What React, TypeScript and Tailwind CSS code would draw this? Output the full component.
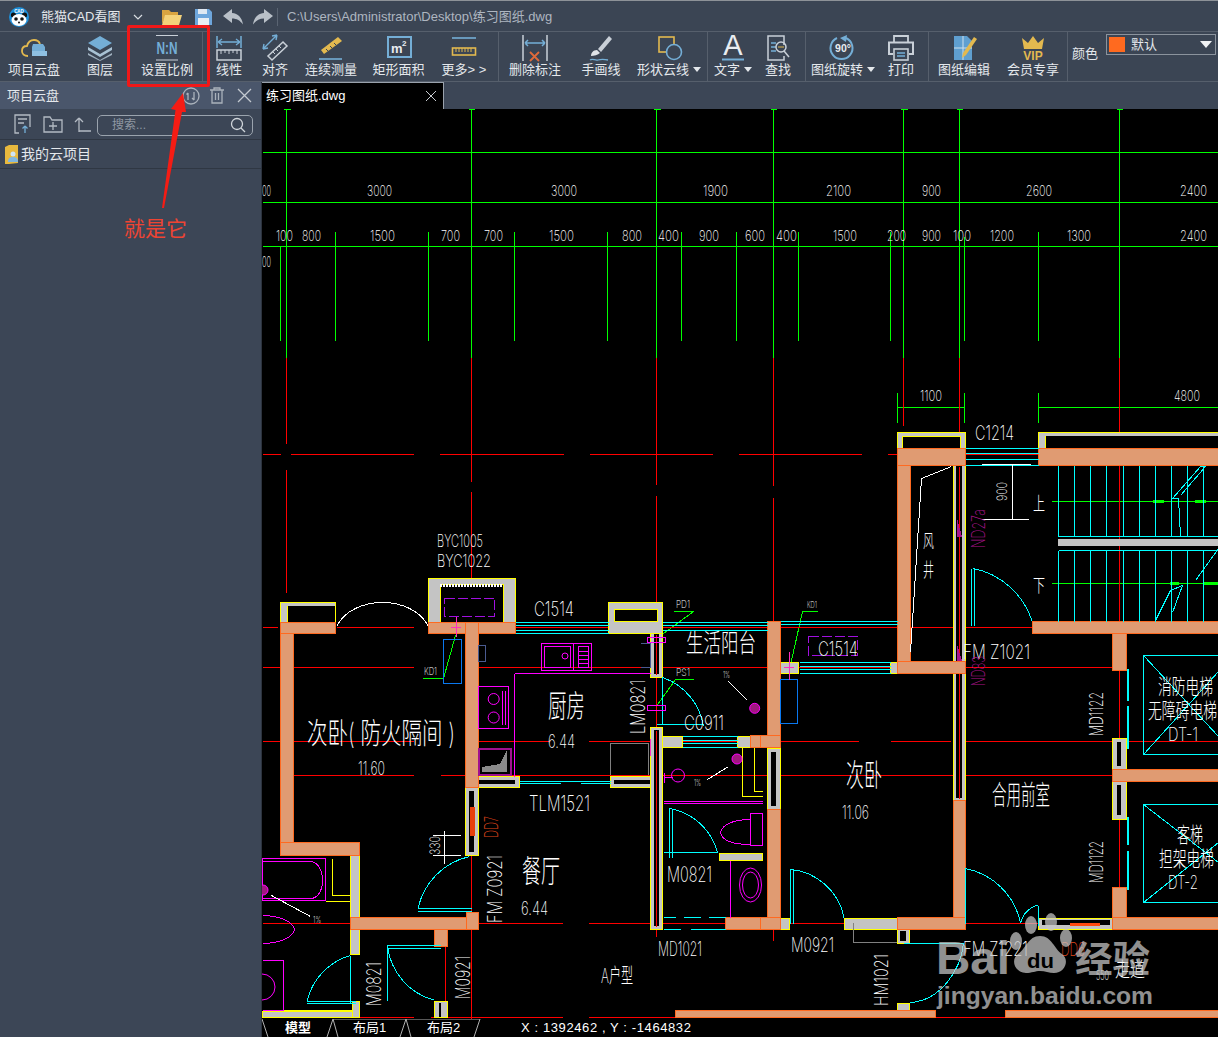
import type { ReactNode } from 'react';

const FONT = "'Liberation Sans','Noto Sans CJK SC',sans-serif";
const CAD_FONT = "Inter,'Noto Sans CJK SC',sans-serif";
const BLUE = '#74aed6';
const GOLD = '#e3b94f';
const PALE = '#c9d0d8';

/* ---------- toolbar icons ---------- */

const Ico = ({ children }: { children: ReactNode }) => (
  <svg width="30" height="28" viewBox="0 0 30 28" fill="none" className="block">
    {children}
  </svg>
);

const TOOL_ICONS: Record<string, ReactNode> = {
  cloud: (
    <Ico>
      <path d="M9 22c-4 0-6-2-6-5s2-5 5-5c1-4 4-6 7-6 3 0 5 1 6 4" stroke={GOLD} strokeWidth="1.8" />
      <path d="M13 13l1-3h10l2 3v5H13z" fill={BLUE} />
      <rect x="13" y="17" width="15" height="5" fill="#8fc0e2" />
    </Ico>
  ),
  layers: (
    <Ico>
      <path d="M15 2l12 7-12 7-12-7z" fill={BLUE} />
      <path d="M3 13l12 7 12-7v3l-12 7-12-7z" fill="#a9c2d4" />
      <path d="M3 19l12 7 12-7v2l-12 6-12-6z" fill="#9fb0be" />
    </Ico>
  ),
  scale: (
    <Ico>
      <path d="M4 1.5h22M4 26h22" stroke={PALE} strokeWidth="1.2" />
      <text x="15" y="20" textAnchor="middle" fontSize="16" fontWeight="700" fill={BLUE} textLength="21" lengthAdjust="spacingAndGlyphs" fontFamily={FONT}>N:N</text>
    </Ico>
  ),
  linear: (
    <Ico>
      <path d="M3 2v12M27 2v12" stroke={BLUE} strokeWidth="1.5" />
      <path d="M4 8h22M4 8l4-3M4 8l4 3M26 8l-4-3M26 8l-4 3" stroke={BLUE} strokeWidth="1.3" />
      <rect x="3" y="16" width="24" height="10" stroke={PALE} strokeWidth="1.5" />
      <path d="M7 16v4M11 16v3M15 16v4M19 16v3M23 16v4" stroke={PALE} />
    </Ico>
  ),
  align: (
    <Ico>
      <path d="M17 1L3 15M3 15l1-5M3 15l5-1M17 1l-5 1M17 1l-1 5" stroke={BLUE} strokeWidth="1.4" />
      <path d="M12 26l-4-4L23 8l4 4z" stroke={PALE} strokeWidth="1.5" />
      <path d="M13 18l2 2M16 15l2 2M19 12l2 2" stroke={PALE} />
    </Ico>
  ),
  chain: (
    <Ico>
      <path d="M8 20l-3-4L22 3l4 4z" fill={GOLD} />
      <path d="M10 15l2 2M14 12l2 2M18 9l2 2" stroke="#3b4554" />
      <path d="M3 25h23" stroke={BLUE} strokeWidth="1.6" />
    </Ico>
  ),
  area: (
    <Ico>
      <rect x="4" y="3" width="23" height="20" stroke={BLUE} strokeWidth="2" />
      <text x="7" y="19" fontSize="13" fontWeight="700" fill="#e8ecf0" fontFamily={FONT}>m</text>
      <text x="18" y="12" fontSize="8" fontWeight="700" fill="#e8ecf0" fontFamily={FONT}>2</text>
    </Ico>
  ),
  more: (
    <Ico>
      <path d="M3 4h24" stroke={BLUE} strokeWidth="1.6" />
      <rect x="3.5" y="14" width="23" height="7" stroke={GOLD} strokeWidth="1.6" />
      <path d="M7 14v4M10 14v4M13 14v4M16 14v4M19 14v4M22 14v4" stroke={GOLD} />
    </Ico>
  ),
  erase: (
    <Ico>
      <path d="M3 1v26M27 1v26" stroke={PALE} strokeWidth="1.5" />
      <path d="M5 9h20M5 9l3-3M5 9l3 3M25 9l-3-3M25 9l-3 3" stroke={BLUE} strokeWidth="1.5" />
      <path d="M10 18l9 9M19 18l-9 9" stroke="#e06a3a" strokeWidth="1.8" />
    </Ico>
  ),
  brush: (
    <Ico>
      <path d="M12 15L23 2l3 3-11 13z" fill={PALE} />
      <path d="M11 16c-4 0-6 3-6 6 3 0 7-1 9-3z" fill="#dfe3e8" />
      <path d="M4 26c3-2 5 1 8 0s6-1 10 0" stroke={BLUE} strokeWidth="1.3" />
    </Ico>
  ),
  shape: (
    <Ico>
      <rect x="5" y="3" width="15" height="15" stroke={GOLD} strokeWidth="1.6" />
      <circle cx="20" cy="18" r="7.5" fill="#3b4554" stroke={BLUE} strokeWidth="1.6" />
    </Ico>
  ),
  text: (
    <Ico>
      <text x="15" y="21" textAnchor="middle" fontSize="29" fill="#e8ecf0" fontFamily={FONT}>A</text>
      <path d="M4 25.5h22" stroke={BLUE} strokeWidth="2" />
    </Ico>
  ),
  find: (
    <Ico>
      <path d="M21 11V2H5v24h16v-4" stroke={PALE} strokeWidth="1.5" />
      <path d="M8 9h5M8 13h5M8 17h5" stroke={BLUE} strokeWidth="1.3" />
      <circle cx="18" cy="13" r="5" stroke={PALE} strokeWidth="1.5" />
      <path d="M21 17l5 6" stroke={PALE} strokeWidth="1.5" />
      <path d="M15 13h6" stroke={GOLD} />
    </Ico>
  ),
  rotate: (
    <Ico>
      <path d="M18 4a11 11 0 1 1-9 0" stroke={BLUE} strokeWidth="2" />
      <path d="M19 1l-7 3 6 4z" fill={BLUE} />
      <text x="15" y="18" textAnchor="middle" fontSize="10.5" fontWeight="700" fill="#e8ecf0" fontFamily={FONT}>90°</text>
    </Ico>
  ),
  print: (
    <Ico>
      <path d="M8 8V2h14v6" stroke={PALE} strokeWidth="1.8" />
      <path d="M7 20H3V8.5h24V20h-4" stroke={PALE} strokeWidth="2" />
      <rect x="8" y="15" width="14" height="11" stroke={PALE} strokeWidth="1.6" />
      <path d="M11 19h8M11 22h8" stroke={BLUE} strokeWidth="1.6" />
    </Ico>
  ),
  edit: (
    <Ico>
      <path d="M5 2h13l5 5v19H5z" fill="#5f9fd0" />
      <path d="M14 2v24M5 14h18" stroke="#cfe0ec" />
      <path d="M13 24l1-5L25 3l3 2-11 16z" fill={GOLD} />
    </Ico>
  ),
  vip: (
    <Ico>
      <path d="M4 4l6 5 5-7 5 7 6-5-2 11H6z" fill={GOLD} />
      <text x="15" y="26" textAnchor="middle" fontSize="12" fontWeight="700" fill={GOLD} fontFamily={FONT}>VIP</text>
    </Ico>
  ),
};

type Tool = { icon?: string; label: string; w: string; caret?: boolean };

const TOOL_GROUPS: Tool[][] = [
  [
    { icon: 'cloud', label: '项目云盘', w: 'w-[68px]' },
    { icon: 'layers', label: '图层', w: 'w-[64px]' },
    { icon: 'scale', label: '设置比例', w: 'w-[70px]' },
  ],
  [
    { icon: 'linear', label: '线性', w: 'w-[52px]' },
    { icon: 'align', label: '对齐', w: 'w-[40px]' },
    { icon: 'chain', label: '连续测量', w: 'w-[72px]' },
    { icon: 'area', label: '矩形面积', w: 'w-[63px]' },
    { icon: 'more', label: '更多> >', w: 'w-[68px]' },
  ],
  [
    { icon: 'erase', label: '删除标注', w: 'w-[72px]' },
    { icon: 'brush', label: '手画线', w: 'w-[60px]' },
    { icon: 'shape', label: '形状云线', w: 'w-[76px]', caret: true },
  ],
  [
    { icon: 'text', label: '文字', w: 'w-[50px]', caret: true },
    { icon: 'find', label: '查找', w: 'w-[47px] pr-[7px]' },
  ],
  [
    { icon: 'rotate', label: '图纸旋转', w: 'w-[74px]', caret: true },
    { icon: 'print', label: '打印', w: 'w-[48px] pr-[6px]' },
  ],
  [
    { icon: 'edit', label: '图纸编辑', w: 'w-[70px]' },
    { icon: 'vip', label: '会员专享', w: 'w-[68px]' },
  ],
];

function ToolButton({ tool }: { tool: Tool }) {
  return (
    <div className={`${tool.w} shrink-0 flex flex-col items-center`}>
      <div className="h-[29px] mt-[1px] flex items-center justify-center">{tool.icon && TOOL_ICONS[tool.icon]}</div>
      <div className="text-[13px] leading-[17px] -mt-[1px] text-[#e4e8ec] whitespace-nowrap flex items-center gap-[4px]">
        {tool.label}
        {tool.caret && <span className="w-0 h-0 border-x-[4px] border-x-transparent border-t-[5px] border-t-[#e4e8ec]" />}
      </div>
    </div>
  );
}

/* ---------- title bar ---------- */

function PandaLogo() {
  return (
    <svg width="20" height="20" viewBox="0 0 20 20">
      <circle cx="10" cy="10" r="10" fill="#1f8fd8" />
      <circle cx="4.5" cy="8" r="2.6" fill="#111" />
      <circle cx="15.5" cy="8" r="2.6" fill="#111" />
      <ellipse cx="10" cy="13" rx="7.5" ry="6" fill="#fff" />
      <circle cx="7" cy="12" r="1.8" fill="#111" />
      <circle cx="13" cy="12" r="1.8" fill="#111" />
      <circle cx="10" cy="15.5" r="1" fill="#111" />
      <text x="10" y="6" textAnchor="middle" fontSize="4.5" fontWeight="700" fill="#fff" fontFamily={FONT}>CAD</text>
    </svg>
  );
}

function TitleBar() {
  return (
    <div className="h-[31px] shrink-0 flex items-center pt-[2px] border-t border-[#8d9298] bg-[#3b4554]">
      <div className="w-[41px] pl-[9px]"><PandaLogo /></div>
      <span className="text-[13px] text-[#e4e8ec] w-[92px]">熊猫CAD看图</span>
      <svg width="10" height="8" viewBox="0 0 10 8" fill="none" className="mr-[18px]">
        <path d="M1 2l4 4 4-4" stroke="#d8dde2" strokeWidth="1.2" />
      </svg>
      <svg width="21" height="18" viewBox="0 0 21 18" className="mr-[12px]">
        <path d="M1 2h7l2 2h7v3H5L1 16z" fill="#d9a441" />
        <path d="M4 7h17l-3 10H1z" fill="#f4d27a" />
      </svg>
      <svg width="19" height="18" viewBox="0 0 19 18" className="mr-[10px]">
        <path d="M1 1h14l3 3v13H1z" fill="#6ea6dc" />
        <rect x="4" y="1" width="9" height="5" fill="#dfe8f2" />
        <rect x="4" y="10" width="11" height="7" fill="#e9eef4" />
      </svg>
      <svg width="21" height="16" viewBox="0 0 21 16" className="mr-[8px]">
        <path d="M9 0L0 7l9 7V9.5c5 0 8 2 11 6-1-7-5-11-11-11.500z" fill="#b9c0c8" />
      </svg>
      <svg width="21" height="16" viewBox="0 0 21 16" className="mr-[4px]">
        <path d="M12 0l9 7-9 7V9.500c-5 0-8 2-11 6 1-7 5-11 11-11.500z" fill="#b9c0c8" />
      </svg>
      <div className="w-px h-[18px] bg-[#5a6472] mr-[9px]" />
      <span className="text-[13px] text-[#aeb6c0]">C:\Users\Administrator\Desktop\练习图纸.dwg</span>
    </div>
  );
}

function ToolBar() {
  return (
    <div className="h-[51px] shrink-0 flex items-stretch border-y border-[#565f6c] bg-[#3b4554]">
      {TOOL_GROUPS.map((group, i) => (
        <div key={i} className="flex border-r border-[#565f6c]">
          {group.map((t) => <ToolButton key={t.label} tool={t} />)}
        </div>
      ))}
      <span className="text-[13px] text-[#e4e8ec] ml-[4px] mr-[8px] self-center -mt-[6px] whitespace-nowrap">颜色</span>
      <div className="w-[110px] h-[21px] mt-[2px] border border-[#8b939d] flex items-center pl-[2px] pr-[3px]">
        <span className="w-[16px] h-[15px] bg-[#ff6a1f] mr-[6px]" />
        <span className="text-[13px] text-[#e4e8ec] flex-1">默认</span>
        <span className="w-0 h-0 border-x-[6px] border-x-transparent border-t-[7px] border-t-[#f0f2f4]" />
      </div>
    </div>
  );
}

/* ---------- left panel ---------- */

function SidePanel() {
  return (
    <div className="w-[262px] shrink-0 bg-[#3c4656] border-r border-[#2c333e] flex flex-col">
      <div className="h-[27px] bg-[#4a566b] flex items-center pl-[7px] text-[13px] text-[#e4e8ec]">
        <span className="flex-1">项目云盘</span>
        <svg width="20" height="20" viewBox="0 0 20 20" fill="none" className="mr-[8px]">
          <circle cx="10" cy="10" r="8" stroke="#aab2bc" strokeWidth="1.3" />
          <path d="M7 7v7M7 7l-1.500 1.500M13 6v8M13 14l-2-2" stroke="#aab2bc" strokeWidth="1.3" />
        </svg>
        <svg width="16" height="17" viewBox="0 0 16 17" fill="none" className="mr-[12px]">
          <path d="M1 3h14M5 3V1h6v2M3 3v13h10V3M6.500 6v7M9.500 6v7" stroke="#aab2bc" strokeWidth="1.3" />
        </svg>
        <svg width="15" height="15" viewBox="0 0 15 15" fill="none" className="mr-[9px]">
          <path d="M1 1l13 13M14 1L1 14" stroke="#c3c9d0" strokeWidth="1.3" />
        </svg>
      </div>
      <div className="h-[31px] border-b border-[#2f3743] flex items-center pl-[13px]">
        <svg width="19" height="20" viewBox="0 0 19 20" fill="none" className="mr-[11px]">
          <path d="M6 19H2V1h15v12" stroke="#b3bac3" strokeWidth="1.300" />
          <path d="M5 5h9M5 9h6" stroke="#b3bac3" strokeWidth="1.300" />
          <path d="M12 19v-7M12 12l-2.500 2.500M12 12l2.500 2.500" stroke={BLUE} strokeWidth="1.300" />
        </svg>
        <svg width="20" height="17" viewBox="0 0 20 17" fill="none" className="mr-[10px]">
          <path d="M1 16V1h6l2 3h10v12z" stroke="#b3bac3" strokeWidth="1.300" />
          <path d="M10 6v8M6 10h8" stroke="#b3bac3" strokeWidth="1.300" />
        </svg>
        <svg width="19" height="17" viewBox="0 0 19 17" fill="none" className="mr-[5px]">
          <path d="M6 16V2M6 2L2 6M6 2l4 4M6 15h12" stroke="#b3bac3" strokeWidth="1.300" />
        </svg>
        <div className="w-[156px] h-[21px] mt-[2px] rounded-[5px] border border-[#9aa3ad] flex items-center pl-[14px] pr-[6px]">
          <span className="text-[12px] text-[#8f98a3] flex-1">搜索...</span>
          <svg width="16" height="16" viewBox="0 0 16 16" fill="none">
            <circle cx="7" cy="7" r="5.500" stroke="#d0d5da" strokeWidth="1.300" />
            <path d="M11 11l4 4" stroke="#d0d5da" strokeWidth="1.300" />
          </svg>
        </div>
      </div>
      <div className="h-[29px] border-b border-[#2f3743] flex items-center pl-[5px] text-[14px] text-[#e4e8ec]">
        <svg width="14" height="19" viewBox="0 0 14 19" className="mr-[2px]">
          <path d="M0 2l4-2h9v18l-9 1H0z" fill="#e8b93e" />
          <circle cx="8" cy="9" r="2.500" fill="#cfe4f5" />
          <path d="M3 17c0-4 2-5 5-5s5 1 5 5z" fill="#7fb6e0" />
        </svg>
        我的云项目
      </div>
    </div>
  );
}

/* ---------- CAD drawing ---------- */

type Label = [string, number, number, number, number, string?, boolean?];
// text, left x, baseline y, width, font size, colour, rotated (x = baseline, y = bottom end)

const LABELS: Label[] = [
  ['00', 262, 196, 9, 15], ['3000', 367, 196, 25, 15], ['3000', 551, 196, 26, 15], ['1900', 703, 196, 25, 15],
  ['2100', 826, 196, 25, 15], ['900', 922, 196, 19, 15], ['2600', 1026, 196, 26, 15], ['2400', 1180, 196, 27, 15],
  ['100', 276, 241, 17, 15], ['800', 302, 241, 19, 15], ['1500', 370, 241, 25, 15], ['700', 441, 241, 19, 15],
  ['700', 484, 241, 19, 15], ['1500', 549, 241, 25, 15], ['800', 622, 241, 20, 15], ['400', 658, 241, 21, 15],
  ['900', 699, 241, 20, 15], ['600', 745, 241, 20, 15], ['400', 776, 241, 21, 15], ['1500', 833, 241, 24, 15],
  ['200', 887, 241, 19, 15], ['900', 922, 241, 19, 15], ['100', 953, 241, 18, 15], ['1200', 990, 241, 24, 15],
  ['1300', 1067, 241, 24, 15], ['2400', 1180, 241, 27, 15], ['00', 262, 267, 9, 15],
  ['1100', 920, 401, 22, 15], ['4800', 1174, 401, 26, 15], ['C1214', 975, 440, 39, 20],
  ['BYC1005', 437, 547, 46, 17], ['BYC1022', 437, 567, 54, 17], ['C1514', 534, 616, 40, 20],
  ['PD1', 676, 608, 14, 10], ['KD1', 424, 675, 13, 10], ['PS1', 676, 676, 14, 10], ['KD1', 807, 608, 10, 9],
  ['生活阳台', 686, 652, 70, 25], ['厨房', 548, 717, 37, 31], ['6.44', 548, 748, 27, 19],
  ['次卧( 防火隔间 )', 307, 744, 148, 29], ['11.60', 358, 775, 27, 19], ['C0911', 684, 730, 40, 20],
  ['TLM1521', 529, 811, 61, 21], ['餐厅', 522, 882, 38, 31], ['6.44', 521, 915, 27, 19],
  ['M0821', 667, 882, 45, 21], ['MD1021', 658, 956, 44, 20], ['A户型', 601, 983, 32, 20],
  ['1%', 723, 678, 7, 9], ['1%', 694, 786, 7, 9], ['1%', 313, 923, 8, 9],
  ['风', 923, 548, 11, 19], ['井', 923, 577, 11, 19], ['上', 1033, 510, 12, 18], ['下', 1033, 592, 12, 18],
  ['FM Z1021', 963, 659, 67, 20], ['C1514', 818, 656, 40, 20], ['次卧', 846, 786, 36, 31], ['11.06', 842, 819, 27, 19],
  ['合用前室', 992, 805, 58, 27], ['消防电梯', 1158, 694, 55, 21], ['无障碍电梯', 1148, 718, 69, 21], ['DT-1', 1168, 741, 30, 19],
  ['客梯', 1177, 842, 26, 21], ['担架电梯', 1159, 866, 55, 21], ['DT-2', 1168, 889, 30, 19],
  ['M0921', 791, 952, 43, 20], ['FM Z1221', 963, 956, 65, 20], ['DD6', 1061, 956, 24, 19, '#e0481c'],
  ['550', 1096, 980, 13, 13], ['走道', 1115, 977, 30, 20],
  ['LM0821', 645, 734, 54, 20, '#fff', true], ['DD7', 498, 838, 22, 18, '#e0481c', true], ['330', 440, 855, 19, 14, '#fff', true],
  ['FM Z0921', 502, 923, 68, 20, '#fff', true], ['M0821', 381, 1006, 44, 20, '#fff', true], ['M0921', 470, 999, 43, 20, '#fff', true],
  ['900', 1007, 501, 19, 14, '#fff', true], ['ND27a', 985, 548, 39, 18, '#a8148c', true], ['ND83', 985, 686, 30, 18, '#a8148c', true],
  ['MD1122', 1103, 736, 44, 19, '#fff', true], ['MD1122', 1103, 883, 42, 19, '#fff', true], ['HM1021', 888, 1006, 52, 19, '#fff', true],
];

// orange walls: x, y, w, h
const WALLS = [
  [280, 622, 13, 233], [280, 622, 55, 11], [280, 842, 79, 13], [428, 622, 87, 11], [465, 622, 13, 165],
  [350, 917, 128, 12], [466, 912, 12, 17], [434, 929, 13, 17], [725, 917, 37, 12], [750, 735, 12, 12],
  [767, 621, 13, 126], [760, 735, 20, 12], [767, 809, 13, 120], [760, 917, 20, 12],
  [897, 448, 13, 225], [897, 448, 68, 17], [897, 661, 68, 12], [953, 800, 12, 129], [897, 917, 68, 12],
  [1038, 448, 180, 17], [1032, 621, 186, 12], [1112, 633, 14, 37], [1112, 769, 106, 12], [1112, 887, 14, 42], [1112, 917, 106, 12],
  [675, 1010, 260, 7], [1005, 1010, 213, 7],
];

// gray wall bodies outlined yellow: x, y, w, h
const GRAY_WALLS = [
  [280, 602, 55, 20], [428, 578, 87, 44], [608, 602, 54, 31], [650, 633, 12, 44], [478, 776, 41, 11], [610, 776, 40, 11],
  [650, 727, 12, 202], [662, 736, 20, 11], [737, 736, 13, 11], [465, 787, 13, 68], [350, 855, 9, 62], [350, 929, 9, 25],
  [262, 1011, 97, 6], [352, 1001, 7, 16], [434, 1001, 13, 16], [719, 853, 43, 7], [767, 748, 13, 61],
  [897, 432, 68, 16], [1038, 432, 180, 16], [953, 465, 12, 335], [1112, 738, 14, 31], [1112, 781, 14, 38],
  [780, 662, 18, 11], [890, 662, 7, 11], [780, 918, 9, 11], [844, 918, 53, 11], [897, 929, 12, 14], [897, 1003, 12, 7], [1038, 918, 74, 11],
];

// black openings inside the gray walls
const HOLES = [
  [287, 606, 48, 16], [440, 584, 63, 38], [614, 609, 43, 13], [654, 634, 5, 40], [478, 780, 37, 4], [614, 780, 36, 4], [654, 730, 5, 196],
  [469, 791, 5, 61], [902, 436, 58, 12], [1045, 436, 173, 12], [956, 466, 6, 332], [1117, 742, 4, 24], [1117, 785, 4, 30],
  [439, 1003, 2, 14], [900, 931, 6, 10], [771, 752, 5, 54], [1042, 920, 68, 5],
];

const GREEN_THIN = 'M262 152H1218M262 202H1218M262 246H1218M471 109V357M656 109V357M773 109V357M903 109V357M959 109V357M1119 109V357M280 246V340M335 231V340M428 231V340M514 231V340M607 231V340M681 231V340M736 231V340M798 231V340M890 231V340M964 236V340M1038 231V340M286 109V357M283 109H290M468 109H474M653 109H660M770 109H776M900 109H907M956 109H962M1116 109H1122M897 392V422M964 392V422M1038 392V422M897 407H964M1038 407H1218M673 611H693L655 639M422 678H443L455 635M693 679H675L655 707M817 611H802L789 669M1051 501H1218M1051 583H1218';
const GREEN_BARS = 'M1152 501H1163M1194 501H1205M1169 583H1178M1203 583H1218';
const RED = 'M286 357V443M286 469V592M471 357V481M471 491V1019M656 357V484M656 495V936M773 357V485M773 497V940M903 357V425M959 357V800M1119 357V887M445 925V1010M262 454H280M290 454H413M439 454H563M589 454H712M738 454H861M887 454H897M965 454H1038M262 627H277M336 627H413M478 627H650M662 627H1032M262 667H280M293 667H413M478 667H897M965 667H1112M262 741H280M293 741H413M478 741H548M588 741H650M662 741H770M780 741H858M890 741H950M965 741H1112M1126 741H1218M293 775H413M440 775H465M478 775H650M662 775H953M965 775H1112M262 923H350M478 923H562M588 923H1218M262 1017H413M430 1017H562M588 1017H1218';
const CYAN = 'M515 622H608M515 625H608M515 630H608M515 633H608M662 622H767M662 625H767M662 630H767M780 621H897M780 624H897M799 662H890M799 666H890M799 669H890M799 673H890M965 448H1038M965 453H1038M965 459H1038M965 465H1038M682 736H737M682 740H737M682 743H737M682 747H737M519 781H610M519 783H560M580 783H610M1058 465V536M1074 465V536M1090 465V536M1106 465V536M1123 465V536M1139 465V536M1155 465V536M1171 465V536M1187 465V536M1203 465V536M1058 550V621M1074 550V621M1090 550V621M1106 550V621M1123 550V621M1139 550V621M1155 550V621M1171 550V621M1187 550V621M1203 550V621M1058 536H1218M1058 550H1218M1180 536L1178 498H1172L1200 466H1205L1180 495M1155 620L1170 590L1182 585L1172 612M1195 580L1218 548M1143 655H1218V754H1143ZM1143 655L1218 736M1143 754L1218 671M1143 804H1218V902H1143ZM1143 804L1218 862M1143 902L1218 842M662 677V724M656 724H703M662 677A62 62 0 0 1 703.500 726M469 856A68 68 0 0 0 418 908.500M417 908H471M417 911H471M350 955A62 62 0 0 0 307 1001.500M306 1001H355M306 1003H355M350 955V1002M387 946A64 64 0 0 0 433.500 1000M386 945H440M386 948H440M387 946V1000M669 808A60 60 0 0 1 717.500 852.500M669 808V857M672 808V857M663 852H717M973 568A78 78 0 0 1 1032 621M971 568V625M974 568V625M790 869A60 60 0 0 1 844 917.500M790 869V923M793 869V923M965 868A70 70 0 0 1 1020.500 923M965 868V923M1020 923A24 24 0 0 1 1038 905M1038 905V925M903 943H963M963 943C960 970 940 1000 910 1002M663 917H675M683 917H700M708 917H725M663 929H680M690 929H725';
const CYAN_THICK = 'M1127 668V700M1127 705V748M1127 816V844M1127 850V889';
const MAGENTA = 'M514 673H650M514 673V776M541 643H591V670H541ZM544 646H570V667H544ZM573 643V670M578 646H588V667H578ZM578 651H588M578 655H588M578 659H588M578 663H588M478 686H508V728H478ZM502 690V724M505 690V724M663 801H762M663 803H762M730 860V917M647 637H665V642H647ZM647 705H665V710H647ZM262 858H325V900H262ZM262 861H310C326 862 326 898 310 898H262M750 813H762V845H750ZM720 832C722 822 738 819 750 819V844C738 844 722 842 720 832ZM262 915C280 915 293 922 294 929C293 936 280 943 262 943M262 960H283V1010H262M664 772V782M664 777H672';
const WHITE = 'M336 626C352 594 412 594 428 626M951 466L921 478L910 652M728 681L747 700M707 779L728 766M271 895L310 916M444 830V863M432 835H460M432 855H460M1012 464V519M981 519H1028M981 464H1030';

// put every straight 1px line on a pixel centre, leave arc arguments alone
const snap = (d: string) =>
  d.replace(/(A[^A-Za-z]*)|(\d+(?:\.\d+)?)/g, (m, arc) => (arc ? arc : String(Math.floor(Number(m)) + 0.5)));

function CadText({ label }: { label: Label }) {
  const [text, x, y, w, size, fill = '#fff', rotated] = label;
  return (
    <text
      x={x}
      y={y}
      fontSize={size}
      fontWeight={200}
      fill={fill}
      fontFamily={CAD_FONT}
      textLength={w}
      lengthAdjust="spacingAndGlyphs"
      transform={rotated ? `rotate(-90 ${x} ${y})` : undefined}
    >
      {text}
    </text>
  );
}

function Drawing() {
  return (
    <svg width="956" height="910" viewBox="262 109 956 910" className="block" fill="none">
      <g shapeRendering="crispEdges">
        <path d={snap(GREEN_THIN)} stroke="#00ff00" />
        <path d={snap(GREEN_BARS)} stroke="#00ff00" strokeWidth="3" />
        <path d={snap(RED)} stroke="#ff0000" />
        <rect x="1058" y="539" width="160" height="7" fill="#c4c4c4" />
        {GRAY_WALLS.map(([x, y, w, h], i) => (
          <rect key={i} x={x} y={y} width={w} height={h} fill="#c4c4c4" stroke="#ffff00" />
        ))}
        {HOLES.map(([x, y, w, h], i) => (
          <rect key={i} x={x} y={y} width={w} height={h} fill="#000" />
        ))}
        <path d="M614 609.500H657V621.500H614ZM287 622V606M440 622V584H503V622M902 448V436H960V448M1045 448V436" stroke="#ffff00" />
        <path d={snap('M656 634V674M656 730V926M959 466V798')} stroke="#ff0000" />
        <path d={snap('M332 858V895H350M325 901H350M742 747V796H762M754 747V791H762M263 1010H352')} stroke="#ffff00" />
        {WALLS.map(([x, y, w, h], i) => (
          <rect key={i} x={x} y={y} width={w} height={h} fill="#e09b72" stroke="#ff6a20" />
        ))}
        <path d="M440 585H503" stroke="#fff" strokeWidth="3" strokeDasharray="2 1" />
        <rect x="470" y="807" width="5" height="29" fill="#e8400c" />
        <path d="M1070 924H1100" stroke="#ff4a10" strokeWidth="3" />
        <path d="M957 518L962 537H957ZM957 644L962 661H957Z" fill="#a8148c" />
        <path d="M444.500 598H494.500V616H444.500ZM808.500 636.500H857.500V655.500H808.500Z" stroke="#a010e0" strokeDasharray="10 3" />
        <path d="M478.500 748.500H511V775H478.500Z" stroke="#a01090" strokeWidth="2" />
        <path d="M482 772V767L500 764L507 750V772Z" fill="#8a8a8a" />
        <path d="M443.500 639.500H461V683.500H443.500ZM780 679.500H797.500V723.500H780Z" stroke="#0a78f0" />
        <path d="M478.500 645H485.500V661H478.500ZM641 643H650V667H641" stroke="#4a5a90" />
        <path d="M610.500 775V743.500H648V775M853.500 923V942.500H897" stroke="#808080" />
        <path d={snap(CYAN)} stroke="#00ffff" />
        <path d={snap(CYAN_THICK)} stroke="#00ffff" strokeWidth="2" />
        <path d={snap(MAGENTA)} stroke="#ff00ff" />
        <path d={snap(WHITE)} stroke="#fff" />
        <path d="M456 617V637M451 627H461M789 652V680M784 667H794M650 739V756" stroke="#ff30c0" />
      </g>
      <circle cx="493.700" cy="699" r="5.500" stroke="#ff00ff" />
      <circle cx="493.700" cy="717.500" r="5.500" stroke="#ff00ff" />
      <circle cx="565" cy="656" r="3" stroke="#ff00ff" />
      <circle cx="678" cy="775.500" r="6.500" stroke="#ff00ff" />
      <circle cx="754.700" cy="708.300" r="5" fill="#a01880" stroke="#ff00ff" />
      <circle cx="737" cy="759" r="5" fill="#a01880" stroke="#ff00ff" />
      <circle cx="263" cy="890" r="5" fill="#a01880" stroke="#ff00ff" />
      <ellipse cx="750.500" cy="885" rx="11" ry="17" stroke="#ff00ff" />
      <ellipse cx="750.500" cy="885" rx="8" ry="13" stroke="#ff00ff" />
      <circle cx="262" cy="987" r="13" stroke="#ff00ff" />
      {LABELS.map((l, i) => <CadText key={i} label={l} />)}
      {/* watermark */}
      <g opacity="0.72" fontFamily={FONT} fontWeight="700" fill="#c8c8c8">
        <text x="936" y="974" fontSize="47" textLength="74" lengthAdjust="spacingAndGlyphs">Bai</text>
        <ellipse cx="1031" cy="925" rx="6" ry="9" />
        <ellipse cx="1051" cy="922" rx="6" ry="9" />
        <ellipse cx="1016" cy="941" rx="6" ry="9" />
        <ellipse cx="1066" cy="938" rx="6" ry="9" />
        <path d="M1040 936c-12 0-14 13-22 18-8 6-3 19 8 19 6 0 9-2 14-2s9 2 14 2c11 0 16-13 8-19-8-5-10-18-22-18z" />
        <text x="1027" y="968" fontSize="20" fill="#000" textLength="27" lengthAdjust="spacingAndGlyphs">du</text>
        <text x="1075" y="973" fontSize="37" textLength="75" lengthAdjust="spacingAndGlyphs">经验</text>
        <text x="937" y="1004" fontSize="23" textLength="216" lengthAdjust="spacingAndGlyphs">jingyan.baidu.com</text>
      </g>
    </svg>
  );
}

function LayoutTabs() {
  return (
    <div className="h-[18px] shrink-0 bg-black relative flex items-center text-[13px] text-white">
      <svg width="956" height="18" viewBox="0 0 956 18" fill="none" className="absolute left-0 top-0">
        <path d="M0 0l6 18M65 18l6-18h73M71 0l5 18M138 18l6-18h74M144 0l5 18M212 18l6-18" stroke="#b0b0b0" />
      </svg>
      <span className="ml-[23px] w-[68px] font-bold">模型</span>
      <span className="w-[74px]">布局1</span>
      <span className="w-[94px]">布局2</span>
      <span className="tracking-[0.6px]">X : 1392462 , Y : -1464832</span>
    </div>
  );
}

function Workspace() {
  return (
    <div className="flex-1 flex flex-col min-w-0">
      <div className="h-[27px] shrink-0 bg-[#3c4656]">
        <div className="w-[182px] h-[27px] bg-black border-t border-r border-[#9aa2ac] flex items-center pl-[4px] pr-[6px] text-[13px] text-white">
          <span className="flex-1">练习图纸.dwg</span>
          <svg width="12" height="12" viewBox="0 0 12 12" fill="none">
            <path d="M1 1l10 10M11 1L1 11" stroke="#c8ccd2" />
          </svg>
        </div>
      </div>
      <div className="h-[910px] bg-black overflow-hidden"><Drawing /></div>
      <LayoutTabs />
    </div>
  );
}

/* red marks drawn over the screenshot */
function Annotation() {
  return (
    <>
      <div className="absolute left-[127px] top-[25px] w-[83px] h-[62px] border-[3px] border-[#f01818] rounded-[2px]" />
      <svg width="60" height="130" viewBox="0 0 60 130" className="absolute left-[150px] top-[88px]">
        <path d="M33 5L21 21L25.500 22L12 120L14 120L32 24L36 24z" fill="#f51c14" />
      </svg>
      <span className="absolute left-[124px] top-[215px] text-[21px] leading-[28px] text-[#ee4433]">就是它</span>
    </>
  );
}

export default function App() {
  return (
    <div className="w-[1218px] h-[1037px] relative overflow-hidden flex flex-col bg-[#3b4554]" style={{ fontFamily: FONT }}>
      <TitleBar />
      <ToolBar />
      <div className="flex-1 flex min-h-0">
        <SidePanel />
        <Workspace />
      </div>
      <Annotation />
    </div>
  );
}
